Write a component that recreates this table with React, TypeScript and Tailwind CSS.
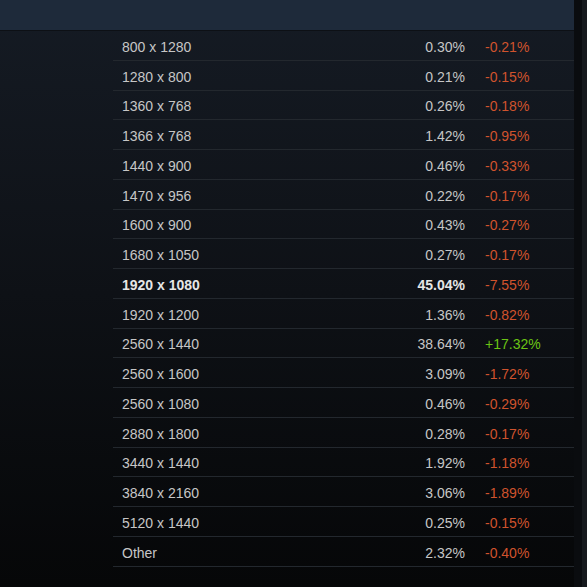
const rows: { res: string; pct: string; change: string; bold?: boolean }[] = [
  { res: "800 x 1280", pct: "0.30%", change: "-0.21%" },
  { res: "1280 x 800", pct: "0.21%", change: "-0.15%" },
  { res: "1360 x 768", pct: "0.26%", change: "-0.18%" },
  { res: "1366 x 768", pct: "1.42%", change: "-0.95%" },
  { res: "1440 x 900", pct: "0.46%", change: "-0.33%" },
  { res: "1470 x 956", pct: "0.22%", change: "-0.17%" },
  { res: "1600 x 900", pct: "0.43%", change: "-0.27%" },
  { res: "1680 x 1050", pct: "0.27%", change: "-0.17%" },
  { res: "1920 x 1080", pct: "45.04%", change: "-7.55%", bold: true },
  { res: "1920 x 1200", pct: "1.36%", change: "-0.82%" },
  { res: "2560 x 1440", pct: "38.64%", change: "+17.32%" },
  { res: "2560 x 1600", pct: "3.09%", change: "-1.72%" },
  { res: "2560 x 1080", pct: "0.46%", change: "-0.29%" },
  { res: "2880 x 1800", pct: "0.28%", change: "-0.17%" },
  { res: "3440 x 1440", pct: "1.92%", change: "-1.18%" },
  { res: "3840 x 2160", pct: "3.06%", change: "-1.89%" },
  { res: "5120 x 1440", pct: "0.25%", change: "-0.15%" },
  { res: "Other", pct: "2.32%", change: "-0.40%" },
];

export default function App() {
  return (
    <div className="flex h-[587px] w-[587px] overflow-hidden bg-[#08090b] font-['Liberation_Sans',Arial,sans-serif] text-[14px]">
      <div className="flex flex-1 flex-col bg-gradient-to-b from-[#151b24] via-[#0e1116] to-[#060708]">
        <div className="h-[31px] shrink-0 border-b border-[#0d1015] bg-[#1e2a3a]" />
        <div className="pl-[113px]">
          {rows.map((r) => (
            <div
              key={r.res}
              className={`flex h-[29.75px] items-center border-b border-[#23282e] pt-[4px] ${r.bold ? "font-bold text-[#e6e6e6]" : "text-[#c6c6c6]"}`}
            >
              <div className="w-[120px] pl-[9px]">{r.res}</div>
              <div className="flex-1 text-right">{r.pct}</div>
              <div
                className={`w-[109px] pl-[20px] font-normal ${r.change.startsWith("+") ? "text-[#6bc414]" : "text-[#d0532d]"}`}
              >
                {r.change}
              </div>
            </div>
          ))}
        </div>
      </div>
      <div className="flex w-[13px] shrink-0">
        <div className="w-[8px] bg-[#0a0c0f]" />
        <div className="flex-1 bg-[#16191d]" />
      </div>
    </div>
  );
}
